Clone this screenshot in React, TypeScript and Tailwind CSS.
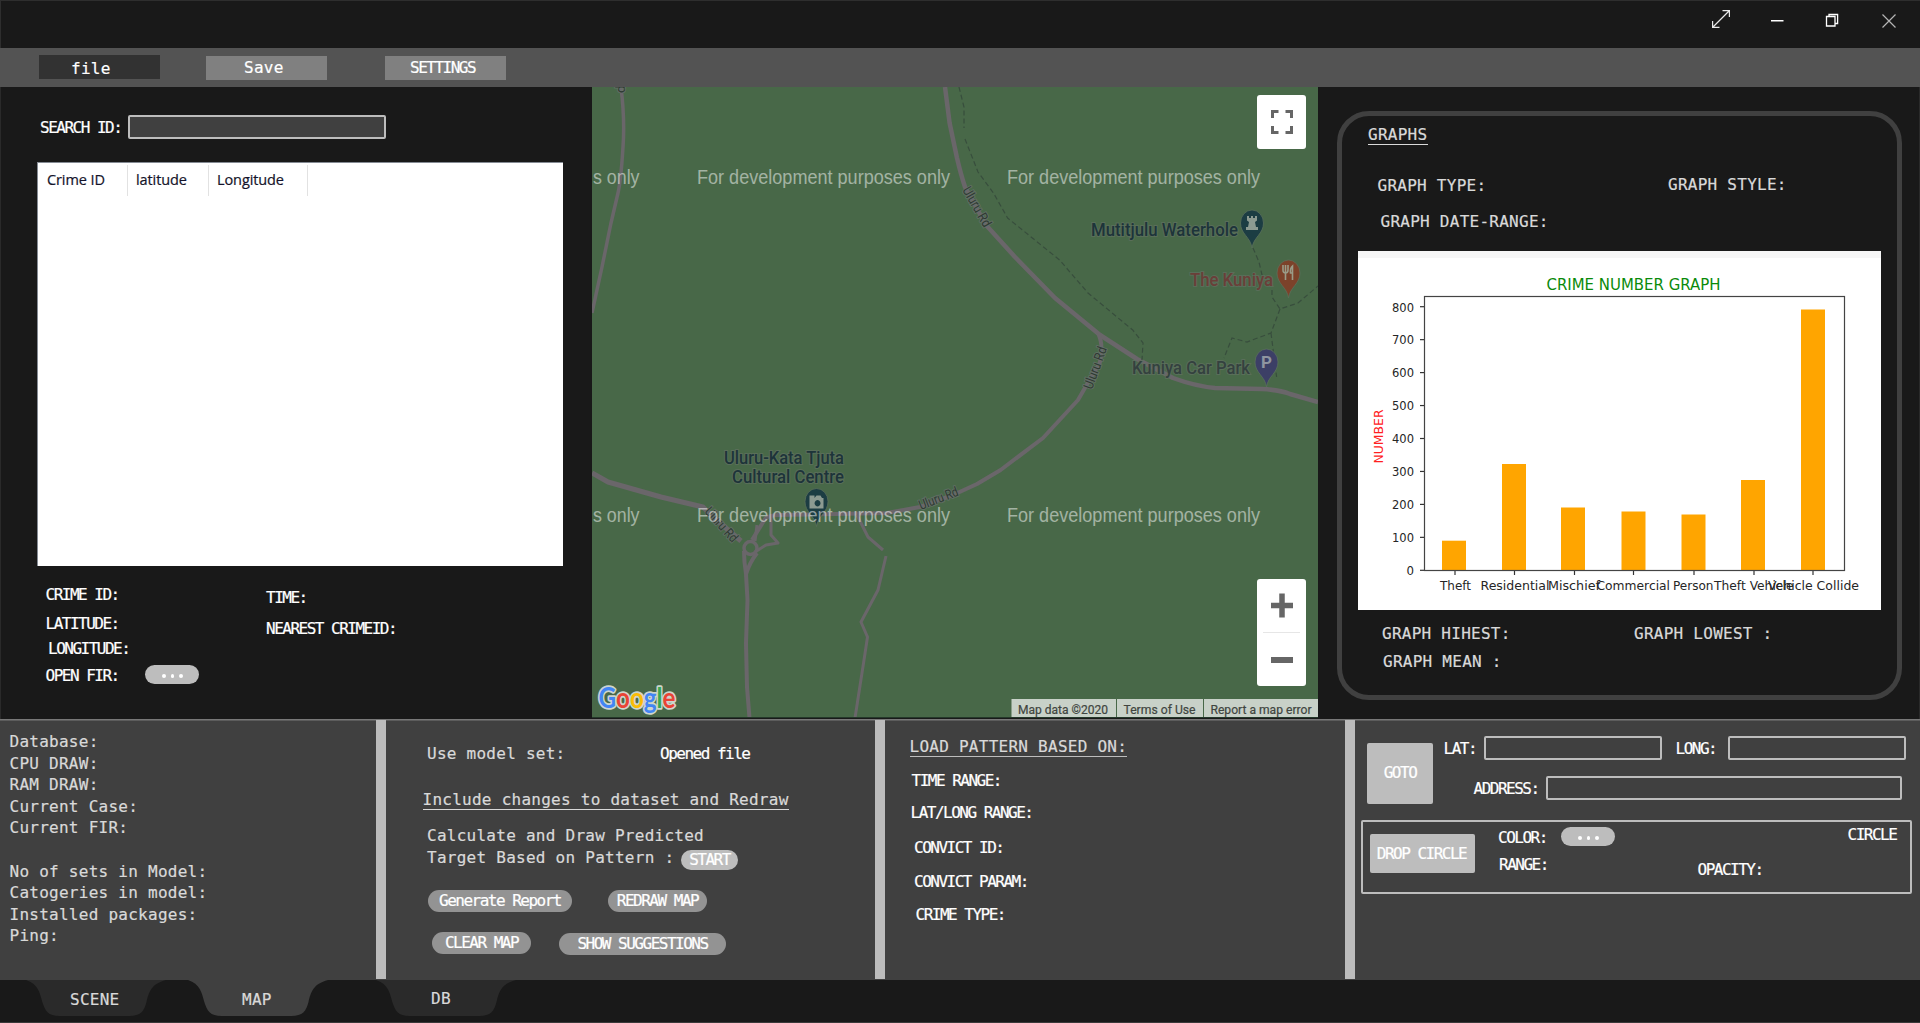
import type { ReactNode } from "react";

const WIDE = "tracking-[0.26px] text-[#d9d9d9]";
const TIGHT = "tracking-[-1.5px] text-white";

function Label({ children, className = "", wide = false }: { children: ReactNode; className?: string; wide?: boolean }) {
  return <div className={`shrink-0 whitespace-pre leading-5 ${wide ? WIDE : TIGHT} ${className}`}>{children}</div>;
}

function Pill({ children, className = "" }: { children: ReactNode; className?: string }) {
  return (
    <button className={`flex shrink-0 items-center justify-center whitespace-pre rounded-full pb-px leading-5 tracking-[-1.5px] text-white ${className}`}>
      {children}
    </button>
  );
}

function Block({ children, className = "" }: { children: ReactNode; className?: string }) {
  return (
    <button className={`flex shrink-0 items-center justify-center whitespace-pre rounded-[2px] bg-[#bdbdbd] leading-5 tracking-[-1.5px] text-white ${className}`}>
      {children}
    </button>
  );
}

function Dots({ className = "" }: { className?: string }) {
  return (
    <button className={`flex h-[19px] w-[54px] shrink-0 items-center justify-center gap-[5px] rounded-full bg-[#bdbdbd] pl-px pt-[3px] ${className}`}>
      <span className="size-[3.5px] rounded-full bg-white" />
      <span className="size-[3.5px] rounded-full bg-white" />
      <span className="size-[3.5px] rounded-full bg-white" />
    </button>
  );
}

function Field({ className = "" }: { className?: string }) {
  return <input className={`h-6 shrink-0 rounded-[2px] border-2 border-[#bdbdbd] bg-[#404040] outline-none ${className}`} />;
}

function TitleBar() {
  return (
    <header className="flex h-12 justify-end border-l border-t border-[#2e2e2e] pr-[23px] pt-2">
      <svg className="mr-[39px]" width="20" height="20" viewBox="0 0 20 20" fill="none" stroke="#e8e8e8" strokeWidth="1.2">
        <path d="M2 18 L18 2 M11.500 1.600 H18.400 V8 M1.600 12 V18.400 H8.500" />
      </svg>
      <svg className="mr-[41px] mt-px" width="14" height="20" viewBox="0 0 14 20">
        <rect x="1" y="10" width="12.500" height="1.500" fill="#fff" />
      </svg>
      <svg className="mr-[41px] mt-px" width="15" height="20" viewBox="0 0 15 20" fill="none" stroke="#fff" strokeWidth="1.3">
        <path d="M1.500 6.500 H10 V16 H1.500 Z M4 6.500 V4.500 H12.600 V13.500 H10" />
      </svg>
      <svg className="mt-px" width="16" height="20" viewBox="0 0 16 20" fill="none" stroke="#b5b5b5" strokeWidth="1.2">
        <path d="M1.500 4.500 L14.500 17.500 M14.500 4.500 L1.500 17.500" />
      </svg>
    </header>
  );
}

function MenuBar() {
  return (
    <nav className="flex h-[39px] bg-[#535353] pl-[39px] pt-[7px]">
      <button className="h-6 w-[121px] bg-[#323232] pl-8 text-left leading-5 tracking-[0.26px] text-white">
        <span className="block pt-[3px] leading-5">file</span>
      </button>
      <button className="ml-[46px] mt-px h-6 w-[121px] bg-[#808080] pl-[38px] text-left leading-5 tracking-[0.26px] text-white">
        <span className="block">Save</span>
      </button>
      <button className="ml-[58px] mt-px h-6 w-[121px] bg-[#808080] pl-[25px] text-left leading-5 tracking-[-1.5px] text-white">
        <span className="block">SETTINGS</span>
      </button>
    </nav>
  );
}

function CrimePanel() {
  return (
    <section className="w-[592px] shrink-0 border-l border-[#2a2a2a] pt-7">
      <div className="flex pl-[39px]">
        <Label className="mt-[3px] w-[88px]">SEARCH ID:</Label>
        <Field className="w-[258px]" />
      </div>
      <div className="ml-9 mt-[23px] h-[404px] w-[526px] border-l border-t border-[#858b94] bg-white pt-0.5 font-['Open_Sans',sans-serif] text-[14.5px] tracking-[-0.1px] text-[#14142a]">
        <div className="flex h-[31px] leading-[30px]">
          <div className="w-[90px] border-r border-[#e2e2e2] pl-[9px]">Crime ID</div>
          <div className="w-[81px] border-r border-[#e2e2e2] pl-2">latitude</div>
          <div className="w-[99px] border-r border-[#e2e2e2] pl-2">Longitude</div>
        </div>
      </div>
      <div className="flex">
        <div className="w-[265px] pl-[44.5px] pt-[19px]">
          <Label>CRIME ID:</Label>
          <Label className="mt-[9px]">LATITUDE:</Label>
          <Label className="ml-[2.5px] mt-[5px]">LONGITUDE:</Label>
          <div className="mt-1.5 flex">
            <Label className="mt-px w-[99.5px]">OPEN FIR:</Label>
            <Dots />
          </div>
        </div>
        <div className="pt-[22px]">
          <Label>TIME:</Label>
          <Label className="mt-[11px]">NEAREST CRIMEID:</Label>
        </div>
      </div>
    </section>
  );
}

function Pin({ x, y, fill, children }: { x: number; y: number; fill: string; children: ReactNode }) {
  return (
    <g transform={`translate(${x} ${y})`}>
      <path d="M0 25 C-1.500 14 -11.500 11 -11.500 0 A11.500 13 0 0 1 11.500 0 C11.500 11 1.500 14 0 25Z" fill={fill} stroke="#5b705b" strokeWidth="0.8" />
      {children}
    </g>
  );
}

function PlaceName({ x, y, w, fill, children }: { x: number; y: number; w: number; fill: string; children: string }) {
  return (
    <text x={x} y={y} textLength={w} lengthAdjust="spacingAndGlyphs" fontSize="17.5" fontWeight="500" fill={fill} stroke="#5f705f" strokeWidth="2" strokeOpacity="0.75" paintOrder="stroke">
      {children}
    </text>
  );
}

const WATERMARKS = [
  { x: 697, y: 183.5 },
  { x: 1007, y: 183.5 },
  { x: 697, y: 521.5 },
  { x: 1007, y: 521.5 },
];

function MapView() {
  return (
    <section className="relative h-[631px] w-[726px] shrink-0 bg-[#486848]">
      <svg className="block" width="726" height="631" viewBox="592 87 726 631" fontFamily="Roboto, sans-serif">
        <g fill="none" stroke="#6a666a" strokeWidth="4" strokeLinejoin="round">
          <path d="M621 87 Q625 120 623 147 Q621 180 618 193 L611 223 L602 267 L592 313" strokeWidth="3.500" />
          <path d="M945 87 L949.6 123 L957 158 Q961 175 965 187 L986 225 L1015 257 L1055 298 L1100 335 L1137 359 L1173 378 Q1195 386 1215 388 L1262 389 Q1280 390 1290 394 L1318 402" strokeWidth="4.500" />
          <path d="M1098 333 Q1104 345 1099.7 363 L1085.500 387 L1078 400 L1043 438 L1000.6 470 L977 484 L953 495 L920 507 L887 513 L835 514 L779 515 Q769 515 765 519 L752 540" />
          <path d="M592 473 L608 482 L661 497 L703 507 L713 517 L741 541" strokeWidth="5" />
          <circle cx="750.500" cy="548" r="6.500" strokeWidth="3.500" />
          <path d="M744 551 Q744 562 746 574 L747.500 600 L746 643 L747 687 L749.500 718 M757 553 Q750 562 746 574" />
          <path d="M771 517 L771 535 L778 543 L766 545 L755 552 M757 525 L755 541" strokeWidth="3" />
          <path d="M857 515 L868 537 L883 550 M886 556 L878 590 L861 622 L867.500 637 L864 660 L855 718" strokeWidth="3" />
        </g>
        <g fill="none" stroke="#384e3d" strokeWidth="1.200" strokeDasharray="5 3">
          <path d="M959 87 L964 107 V128 M965 139 L978 172 L993.500 193 L1007.6 218 L1059.6 260 L1088 293 L1132.7 330 L1143 343 L1142 360" />
          <path d="M1253 248 L1259 262 L1262.500 277 M1272 290 L1272 297 L1280 309 L1298 303 L1318 286 M1280 309 L1271 333 L1247 342 L1232 338 L1224 358 M1271 333 L1276.6 377" />
        </g>
        <g fontSize="13.500" fill="#2f3a33" stroke="#66706a" strokeWidth="2" strokeOpacity="0.8" paintOrder="stroke">
          <text transform="translate(962 190) rotate(60)" textLength="44" lengthAdjust="spacingAndGlyphs">Uluru Rd</text>
          <text transform="translate(1092 390) rotate(-70)" textLength="44" lengthAdjust="spacingAndGlyphs">Uluru Rd</text>
          <text transform="translate(921 510) rotate(-21)" textLength="41" lengthAdjust="spacingAndGlyphs">Uluru Rd</text>
          <text transform="translate(704 512) rotate(48)" textLength="42" lengthAdjust="spacingAndGlyphs">Uluru Rd</text>
          <text transform="translate(625 93) rotate(-90)">d</text>
        </g>
        <PlaceName x={1091} y={236} w={147} fill="#1d343a">Mutitjulu Waterhole</PlaceName>
        <PlaceName x={1190} y={286} w={83} fill="#6a3f38">The Kuniya</PlaceName>
        <PlaceName x={1132} y={374} w={118} fill="#34413f">Kuniya Car Park</PlaceName>
        <PlaceName x={724} y={464} w={120} fill="#1d343a">Uluru-Kata Tjuta</PlaceName>
        <PlaceName x={732} y={482.5} w={112} fill="#1d343a">Cultural Centre</PlaceName>
        <Pin x={1252} y={223} fill="#1c3d43">
          <path d="M-5 -7 H-3 V-5 H-1 V-7 H1 V-5 H3 V-7 H5 V-2.500 L3 -1 L4 4 H6 V7 H-6 V4 H-4 L-3 -1 L-5 -2.500Z" fill="#8c9a91" />
        </Pin>
        <Pin x={1288.5} y={273} fill="#7c422a">
          <path d="M-5.500 -8 V-3 Q-5.500 0 -3 0 Q-0.500 0 -0.500 -3 V-8 M-3 -8 V7 M4 7 V-7 Q1.500 -5 2 0 H4" fill="none" stroke="#9a9c88" strokeWidth="1.600" />
        </Pin>
        <Pin x={1266.5} y={362} fill="#3c3f66">
          <text x="0" y="6" textAnchor="middle" fontSize="17" fontWeight="700" fill="#8f95a0">P</text>
        </Pin>
        <Pin x={816.5} y={501.5} fill="#1c3d43">
          <path fillRule="evenodd" d="M-7 -6 H-2 V-3.500 L0 -6 H4 L5.500 -3.500 H7 V7 H-7Z M1 -1.500 A3 3.200 0 1 0 1.100 -1.500Z" fill="#8c9a91" />
        </Pin>
        <g fontFamily="Liberation Sans, sans-serif" fontSize="19.500" fill="#fff" fillOpacity="0.5">
          {WATERMARKS.map((m, i) => (
            <text key={i} x={m.x} y={m.y} textLength="253" lengthAdjust="spacingAndGlyphs">
              For development purposes only
            </text>
          ))}
          <text x="593" y="183.500" textLength="46.500" lengthAdjust="spacingAndGlyphs">s only</text>
          <text x="593" y="521.500" textLength="46.500" lengthAdjust="spacingAndGlyphs">s only</text>
        </g>
        <text x="598.500" y="708" textLength="77" lengthAdjust="spacingAndGlyphs" fontFamily="Lato, sans-serif" fontSize="28" fontWeight="700" stroke="#cdd5cd" strokeWidth="3.500" strokeLinejoin="round" paintOrder="stroke">
          <tspan fill="#4285f4">G</tspan>
          <tspan fill="#ea4335">o</tspan>
          <tspan fill="#fbbc05">o</tspan>
          <tspan fill="#4285f4">g</tspan>
          <tspan fill="#34a853">l</tspan>
          <tspan fill="#ea4335">e</tspan>
        </text>
        <rect x="1011.500" y="699" width="306.500" height="18" fill="#c8d1c8" />
        <path d="M1116.500 699 V717 M1203.500 699 V717" stroke="#486848" />
        <g fontSize="12.500" fill="#404540" stroke="#404540" strokeWidth="0.2">
          <text x="1018" y="713.500" textLength="90" lengthAdjust="spacingAndGlyphs">Map data ©2020</text>
          <text x="1123.500" y="713.500" textLength="72" lengthAdjust="spacingAndGlyphs">Terms of Use</text>
          <text x="1210.500" y="713.500" textLength="101" lengthAdjust="spacingAndGlyphs">Report a map error</text>
        </g>
        <path d="M592 717.500 H1318" stroke="#24382a" />
      </svg>
      <button className="absolute right-[12px] top-[8px] flex h-[54px] w-[49px] items-center justify-center rounded-[3px] bg-white">
        <svg width="22" height="24" viewBox="0 0 22 24" fill="none" stroke="#666" strokeWidth="3">
          <path d="M1.500 8 V1.500 H7.500 M14.500 1.500 H20.500 V8 M20.500 16 V22.500 H14.500 M7.500 22.500 H1.500 V16" />
        </svg>
      </button>
      <div className="absolute right-[12px] top-[492px] flex h-[107px] w-[49px] flex-col items-center rounded-[3px] bg-white">
        <svg className="mt-3.5" width="22" height="25" viewBox="0 0 22 25" stroke="#666" strokeWidth="5.500">
          <path d="M0 12.500 H22 M11 0.500 V24.500" />
        </svg>
        <div className="mt-[14px] h-px w-[37px] bg-[#e6e6e6]" />
        <div className="mt-6 h-[5.5px] w-[22px] bg-[#666]" />
      </div>
    </section>
  );
}

const BARS = [
  { x: 1442, top: 540.7, tick: 1455, name: "Theft", lx: 1440, w: 31 },
  { x: 1502, top: 464, tick: 1514.5, name: "Residential", lx: 1480.5, w: 69 },
  { x: 1561, top: 507.5, tick: 1574.5, name: "Mischief", lx: 1548, w: 52 },
  { x: 1621.5, top: 511.5, tick: 1633.5, name: "Commercial", lx: 1596.5, w: 73.5 },
  { x: 1681.5, top: 514.5, tick: 1694, name: "Person", lx: 1673, w: 40.5 },
  { x: 1741, top: 480, tick: 1754, name: "Theft Vehicle", lx: 1714, w: 79.5 },
  { x: 1801, top: 309.5, tick: 1813, name: "Vehicle Collide", lx: 1768, w: 91 },
];

function Chart() {
  return (
    <svg className="ml-4 mt-[19px] block" width="523" height="359" viewBox="1358 251 523 359" fontFamily="DejaVu Sans, sans-serif" fontSize="13" fill="#262626">
      <rect x="1358" y="251" width="523" height="359" fill="#fff" />
      <rect x="1358" y="251" width="523" height="7" fill="#f6f6f6" />
      <text x="1546.500" y="289.500" textLength="174" lengthAdjust="spacingAndGlyphs" fontSize="15.500" fill="#0a8a0a">CRIME NUMBER GRAPH</text>
      <text transform="translate(1383.300 463.500) rotate(-90)" textLength="54" lengthAdjust="spacingAndGlyphs" fill="#ff2020">NUMBER</text>
      {[0, 100, 200, 300, 400, 500, 600, 700, 800].map((v) => {
        const y = 570.3 - v * 0.3295;
        return (
          <g key={v}>
            <path d={`M1420 ${y} H1424`} stroke="#333" strokeWidth="1.200" />
            <text x={v ? 1392 : 1406.5} y={y + 4.8} textLength={v ? 22 : 7.5} lengthAdjust="spacingAndGlyphs">{v}</text>
          </g>
        );
      })}
      {BARS.map((b) => (
        <g key={b.name}>
          <rect x={b.x} y={b.top} width="24" height={570.3 - b.top} fill="#ffa500" />
          <path d={`M${b.tick} 570 V575`} stroke="#333" strokeWidth="1.200" />
          <text x={b.lx} y="589.500" textLength={b.w} lengthAdjust="spacingAndGlyphs">{b.name}</text>
        </g>
      ))}
      <rect x="1424.500" y="296.500" width="420" height="274" fill="none" stroke="#444" strokeWidth="1.200" />
    </svg>
  );
}

function GraphPanel() {
  return (
    <section className="w-[602px] shrink-0 border-r border-[#2a2a2a] pl-[19px] pt-6">
      <div className="h-[589px] w-[565px] rounded-[32px] border-[5px] border-[#404040] pt-[9px]">
        <div className="ml-[26px] flex">
          <Label wide className="h-[20px] w-[60px] border-b border-[#d9d9d9]">GRAPHS</Label>
        </div>
        <div className="ml-[35.5px] mt-[30px] flex h-[21px]">
          <Label wide className="mt-px w-[290.5px]">GRAPH TYPE:</Label>
          <Label wide>GRAPH STYLE:</Label>
        </div>
        <Label wide className="ml-[38.5px] mt-4">GRAPH DATE-RANGE:</Label>
        <Chart />
        <div className="ml-10 mt-3.5 flex">
          <Label wide className="w-[252px]">GRAPH HIHEST:</Label>
          <Label wide>GRAPH LOWEST :</Label>
        </div>
        <Label wide className="ml-[41px] mt-2">GRAPH MEAN :</Label>
      </div>
    </section>
  );
}

const STATS = ["Database:", "CPU DRAW:", "RAM DRAW:", "Current Case:", "Current FIR:", " ", "No of sets in Model:", "Catogeries in model:", "Installed packages:", "Ping:"];

function Divider() {
  return <div className="h-[259px] w-[10px] shrink-0 bg-[#bcbcbc]" />;
}

function BottomPanels() {
  return (
    <div className="flex h-[261px] border-t border-[#787878] bg-[#404040]">
      <section className="w-[376px] border-t border-[#5c5c5c] pl-[9.5px] pt-2.5 leading-[21.6px] tracking-[0.26px] text-[#d9d9d9]">
        {STATS.map((s) => (
          <div key={s} className="whitespace-pre">{s}</div>
        ))}
      </section>
      <Divider />
      <section className="w-[489px] border-t border-[#5c5c5c] pt-[23px]">
        <div className="flex pl-[41px]">
          <Label wide className="w-[233px]">Use model set:</Label>
          <Label>Opened file</Label>
        </div>
        <div className="mt-[26px] flex pl-[36.5px]">
          <Label wide className="h-[20px] border-b border-[#d9d9d9]">Include changes to dataset and Redraw</Label>
        </div>
        <div className="mt-[15px] flex pl-[41px]">
          <div className="w-[254px] whitespace-pre leading-[22px] tracking-[0.26px] text-[#d9d9d9]">
            <div>Calculate and Draw Predicted</div>
            <div>Target Based on Pattern :</div>
          </div>
          <Pill className="mt-[25px] h-5 w-[57px] bg-[#bdbdbd]">START</Pill>
        </div>
        <div className="mt-5 flex pl-[42px]">
          <Pill className="h-[22px] w-36 bg-[#939393]">Generate Report</Pill>
          <Pill className="ml-9 h-[22px] w-[99px] bg-[#939393]">REDRAW MAP</Pill>
        </div>
        <div className="mt-5 flex pl-[46px]">
          <Pill className="h-[22px] w-[99px] bg-[#939393]">CLEAR MAP</Pill>
          <Pill className="ml-7 mt-px h-[22px] w-[167px] bg-[#939393]">SHOW SUGGESTIONS</Pill>
        </div>
      </section>
      <Divider />
      <section className="w-[460px] border-t border-[#5c5c5c] pt-4">
        <div className="flex pl-[24.5px]">
          <Label wide className="h-[20px] border-b border-[#bdbdbd]">LOAD PATTERN BASED ON:</Label>
        </div>
        <Label className="ml-[26.5px] mt-3.5">TIME RANGE:</Label>
        <Label className="ml-[25.5px] mt-3">LAT/LONG RANGE:</Label>
        <Label className="ml-[29px] mt-[15px]">CONVICT ID:</Label>
        <Label className="ml-[29px] mt-3.5">CONVICT PARAM:</Label>
        <Label className="ml-[30.5px] mt-[13px]">CRIME TYPE:</Label>
      </section>
      <Divider />
      <section className="w-[565px] border-t border-[#5c5c5c] pt-[15px]">
        <div className="flex pl-3">
          <Block className="mt-[7px] h-[61px] w-[66px] pb-px">GOTO</Block>
          <div>
            <div className="flex pl-[10.5px]">
              <Label className="mt-[3px] w-[40.5px]">LAT:</Label>
              <Field className="w-[178px]" />
              <Label className="ml-[13.5px] mt-[3px] w-[52.5px]">LONG:</Label>
              <Field className="w-[178px]" />
            </div>
            <div className="mt-4 flex pl-[40.5px]">
              <Label className="mt-[3px] w-[72.5px]">ADDRESS:</Label>
              <Field className="w-[356px]" />
            </div>
          </div>
        </div>
        <div className="ml-1.5 mt-4 flex h-[74px] w-[551px] rounded-[2px] border-2 border-[#bdbdbd]">
          <Block className="ml-[7px] mt-3 h-[39px] w-[105px] pr-0.5">DROP CIRCLE</Block>
          <div className="ml-[23px] w-[199.5px] pt-[5px]">
            <div className="flex">
              <Label className="mt-px w-[63px]">COLOR:</Label>
              <Dots />
            </div>
            <Label className="ml-px mt-[7px]">RANGE:</Label>
          </div>
          <Label className="mt-[38px] w-[150px]">OPACITY:</Label>
          <Label className="mt-[3px]">CIRCLE</Label>
        </div>
      </section>
    </div>
  );
}

function Tab({ label, className, fill }: { label: string; className: string; fill: string }) {
  return (
    <button className={`relative flex h-9 w-[140px] shrink-0 text-left ${className}`}>
      <svg className="absolute inset-0" width="140" height="36" viewBox="0 0 140 36">
        <path d="M0 0 C12 4 14 13 16 21 C19 31 22 36 34 36 H103 C115 36 118 31 120.500 22 C123 12 125 4 140 0Z" fill={fill} />
      </svg>
      <span className="relative leading-5 tracking-[0.26px] text-[#d9d9d9]">{label}</span>
    </button>
  );
}

function SceneTabs() {
  return (
    <footer className="flex h-[43px] border-b border-[#3a3a3a] pl-[26px]">
      <Tab label="SCENE" fill="#2a2a2a" className="pl-11 pt-[10px]" />
      <Tab label="MAP" fill="#404040" className="ml-[22px] pl-[54px] pt-[10px]" />
      <Tab label="DB" fill="#2a2a2a" className="ml-[48px] pl-[55px] pt-[9px]" />
    </footer>
  );
}

export default function App() {
  return (
    <div className="flex h-[1023px] w-[1920px] flex-col overflow-hidden bg-[#191919] font-['DejaVu_Sans_Mono',monospace] text-[16px] [-webkit-text-stroke:0.2px]">
      <TitleBar />
      <MenuBar />
      <main className="flex h-[632px]">
        <CrimePanel />
        <MapView />
        <GraphPanel />
      </main>
      <BottomPanels />
      <SceneTabs />
    </div>
  );
}
